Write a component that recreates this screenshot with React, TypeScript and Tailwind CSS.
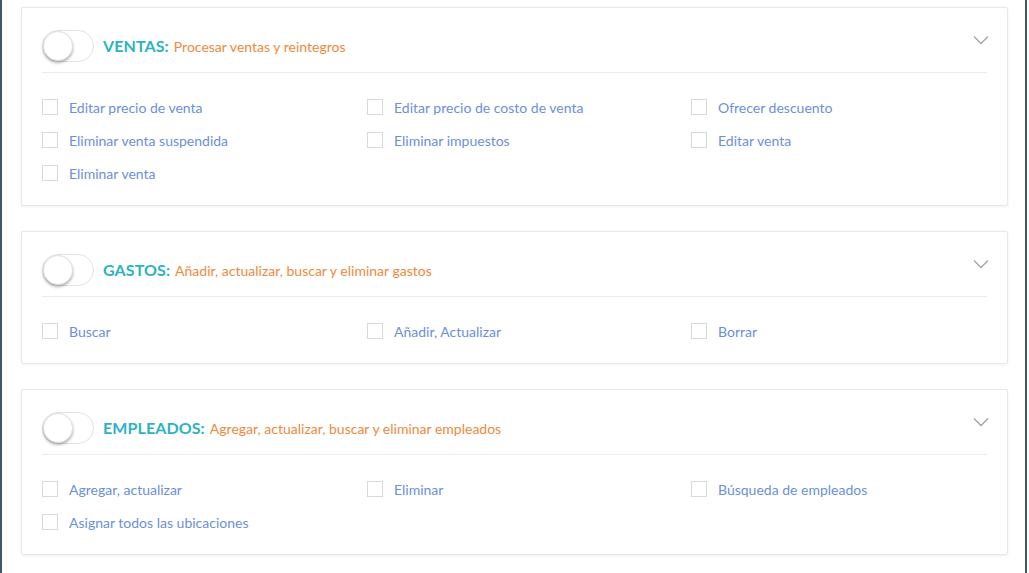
type Section = {
  title: string;
  desc: string;
  perms: string[];
};

const SECTIONS: Section[] = [
  {
    title: 'VENTAS:',
    desc: 'Procesar ventas y reintegros',
    perms: [
      'Editar precio de venta',
      'Editar precio de costo de venta',
      'Ofrecer descuento',
      'Eliminar venta suspendida',
      'Eliminar impuestos',
      'Editar venta',
      'Eliminar venta',
    ],
  },
  {
    title: 'GASTOS:',
    desc: 'Añadir, actualizar, buscar y eliminar gastos',
    perms: ['Buscar', 'Añadir, Actualizar', 'Borrar'],
  },
  {
    title: 'EMPLEADOS:',
    desc: 'Agregar, actualizar, buscar y eliminar empleados',
    perms: ['Agregar, actualizar', 'Eliminar', 'Búsqueda de empleados', 'Asignar todos las ubicaciones'],
  },
];

function Toggle() {
  return (
    <div className="w-[52px] h-[32px] rounded-full border border-[#e3e3e3] bg-white relative shrink-0">
      <div className="absolute left-0 top-0 w-[30px] h-[30px] rounded-full bg-white border border-[#e0e0e0] shadow-[0_2px_3px_rgba(0,0,0,0.3)]" />
    </div>
  );
}

function Chevron() {
  return (
    <svg width="16" height="10" viewBox="0 0 16 10" className="ml-auto mr-[-2px] mt-[-13px]">
      <polyline points="1,1.5 8,8.5 15,1.5" fill="none" stroke="#a3a3a3" strokeWidth="1.3" />
    </svg>
  );
}

function PermissionCard({ section }: { section: Section }) {
  return (
    <div className="bg-white border border-[#e5e8ee] rounded-[2px] shadow-[0_1px_3px_rgba(0,0,0,0.06)] px-[20px] pt-[22px] pb-[24px]">
      {/* Header */}
      <div className="flex items-center h-[32px]">
        <Toggle />
        <span className="ml-[9px] text-[16px] font-bold text-[#2db3bf] tracking-[0.1px]">{section.title}</span>
        <span className="ml-[5px] text-[14px] text-[#ef8a3c] mt-[1px]">{section.desc}</span>
        <Chevron />
      </div>
      <div className="h-px bg-[#ececf0] mt-[10px]" />

      {/* Permissions */}
      <div className="grid grid-cols-[325px_324px_1fr] gap-y-[17px] mt-[26px]">
        {section.perms.map((p) => (
          <label key={p} className="flex items-center h-[16px]">
            <span className="w-[16px] h-[16px] border border-[#d5d9e3] bg-white shrink-0" />
            <span className="ml-[11px] text-[14px] text-[#6c8fdc]">{p}</span>
          </label>
        ))}
      </div>
    </div>
  );
}

export default function App() {
  return (
    <div
      className="w-[1029px] h-[573px] bg-white border-l-2 border-[#3f5671] overflow-hidden"
      style={{ fontFamily: 'Lato, "Noto Sans", sans-serif' }}
    >
      <div className="flex h-full">
        <div className="w-[1023px] pl-[19px] pr-[17px] pt-[7px] flex flex-col gap-[25px]">
          {SECTIONS.map((s) => (
            <PermissionCard key={s.title} section={s} />
          ))}
        </div>
        <div className="w-[2px] h-full bg-[#3f5671]" />
      </div>
    </div>
  );
}
